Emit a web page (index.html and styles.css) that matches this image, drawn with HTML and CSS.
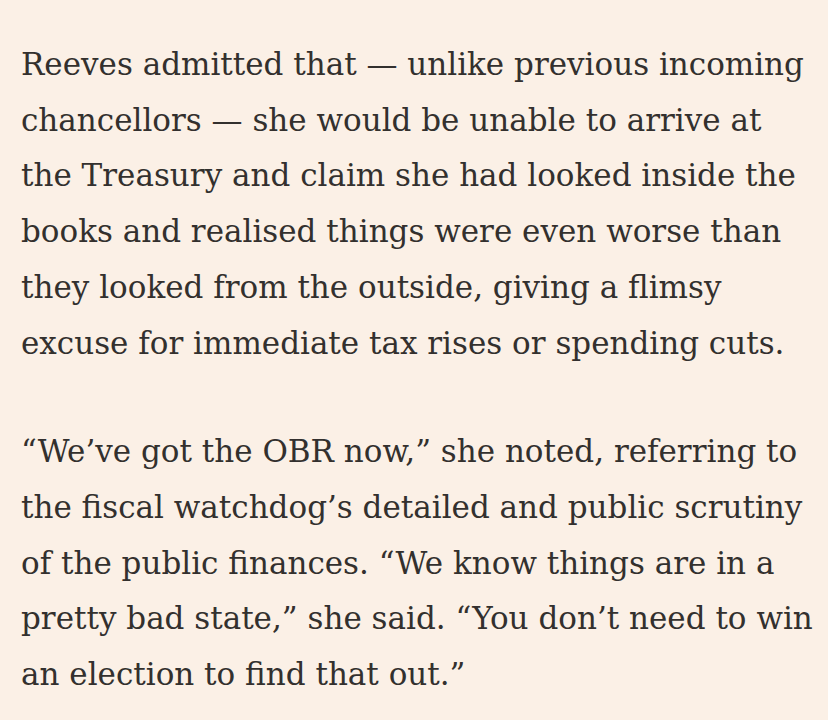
FILE: index.html
```html
<!DOCTYPE html>
<html lang="en">
<head>
<meta charset="utf-8">
<title>Article</title>
<link rel="stylesheet" href="styles.css">
</head>
<body>
<article class="article">
<p class="para">Reeves admitted that — unlike previous incoming<br>chancellors — she would be unable to arrive at<br>the Treasury and claim she had looked inside the<br>books and realised things were even worse than<br>they looked from the outside, giving a flimsy<br>excuse for immediate tax rises or spending cuts.</p>
<p class="para">“We’ve got the OBR now,” she noted, referring to<br>the fiscal watchdog’s detailed and public scrutiny<br>of the public finances. “We know things are in a<br>pretty bad state,” she said. “You don’t need to win<br>an election to find that out.”</p>
</article>
</body>
</html>
```
FILE: styles.css
```css
html, body {
  margin: 0;
  padding: 0;
  background: #fbf0e6;
}
body {
  width: 828px;
  height: 720px;
  overflow: hidden;
}
.article {
  padding: 37px 0 0 21px;
  font-family: "DejaVu Serif", "Liberation Serif", serif;
  font-size: 31px;
  line-height: 55.7px;
  color: #33302e;
}
.para {
  margin: 0 0 53px 0;
  white-space: nowrap;
}
```
